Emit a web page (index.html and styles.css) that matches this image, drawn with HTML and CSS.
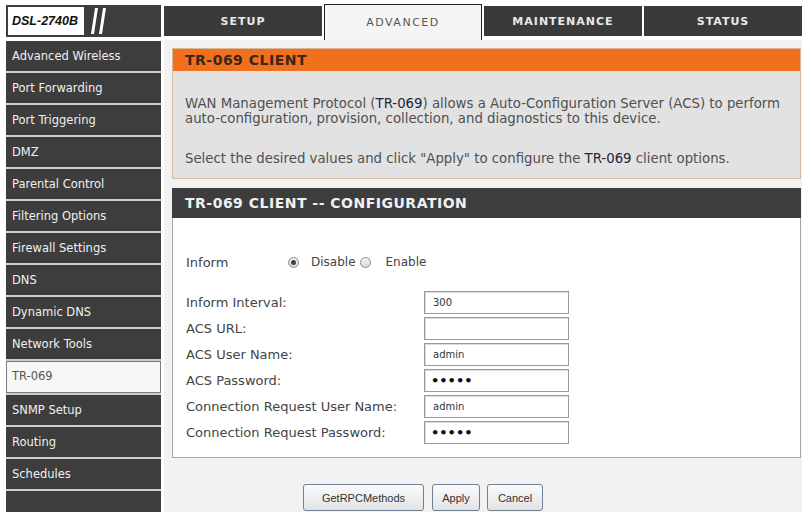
FILE: index.html
```html
<!DOCTYPE html>
<html lang="en">
<head>
	<meta charset="UTF-8">
	<title>DSL-2740B - TR-069</title>
	<link rel="stylesheet" href="styles.css">
</head>
<body>
	<div class="page">
		<div class="side">
			<div class="logo">
				<span class="model">DSL-2740B</span>
				<svg class="slash" width="22" height="30" viewBox="0 0 22 30">
					<path d="M3 28 L7 2 L10 2 L6 28 Z" fill="#fff"/>
					<path d="M11 28 L15 2 L18 2 L14 28 Z" fill="#fff"/>
				</svg>
			</div>
			<ul class="menu">
				<li><a href="javascript:">Advanced Wireless</a></li>
				<li><a href="javascript:">Port Forwarding</a></li>
				<li><a href="javascript:">Port Triggering</a></li>
				<li><a href="javascript:">DMZ</a></li>
				<li><a href="javascript:">Parental Control</a></li>
				<li><a href="javascript:">Filtering Options</a></li>
				<li><a href="javascript:">Firewall Settings</a></li>
				<li><a href="javascript:">DNS</a></li>
				<li><a href="javascript:">Dynamic DNS</a></li>
				<li><a href="javascript:">Network Tools</a></li>
				<li class="cur"><a href="javascript:">TR-069</a></li>
				<li><a href="javascript:">SNMP Setup</a></li>
				<li><a href="javascript:">Routing</a></li>
				<li><a href="javascript:">Schedules</a></li>
				<li class="blank"></li>
			</ul>
		</div>
		<div class="main">
			<ul class="tabs">
				<li>SETUP</li>
				<li class="on">ADVANCED</li>
				<li>MAINTENANCE</li>
				<li>STATUS</li>
			</ul>
			<div class="content">
				<div class="intro">
					<h2>TR-069 CLIENT</h2>
					<div class="intro_txt">
						<p>WAN Management Protocol (<span class="hl">TR-069</span>) allows a Auto-Configuration Server (ACS) to perform<br>auto-configuration, provision, collection, and diagnostics to this device.</p>
						<p>Select the desired values and click "Apply" to configure the <span class="hl">TR-069</span> client options.</p>
					</div>
				</div>
				<div class="conf">
					<h2>TR-069 CLIENT -- CONFIGURATION</h2>
					<div class="conf_body">
						<div class="inform">
							<span class="lbl">Inform</span>
							<input type="radio" name="inform" class="r1" checked>
							<span>Disable</span>
							<input type="radio" name="inform" class="r2">
							<span>Enable</span>
						</div>
						<div class="fields">
							<label>Inform Interval:</label><input type="text" value="300">
							<label>ACS URL:</label><input type="text" value="">
							<label>ACS User Name:</label><input type="text" value="admin">
							<label>ACS Password:</label><input type="password" class="pwd" value="admin">
							<label>Connection Request User Name:</label><input type="text" value="admin">
							<label>Connection Request Password:</label><input type="password" class="pwd" value="admin">
						</div>
					</div>
				</div>
				<div class="btns">
					<button class="b_get">GetRPCMethods</button>
					<button class="b_apply">Apply</button>
					<button class="b_cancel">Cancel</button>
				</div>
			</div>
		</div>
	</div>
</body>
</html>
```
FILE: styles.css
```css
/*reset*/
body{margin: 0; font-family: "DejaVu Sans", Verdana, sans-serif; background: #fff;}
ul,p,h2{margin: 0; padding: 0;}
a{text-decoration: none;}
li{list-style: none;}

/*frame*/
.page{display: flex; gap: 3px; width: 804px; height: 512px; padding: 4px 2px 0 6px; box-sizing: border-box; overflow: hidden;}
.side{width: 155px; display: flex; flex-direction: column; flex-shrink: 0;}
.main{flex: 1; min-width: 0; display: flex; flex-direction: column;}

/*logo*/
.logo{height: 32px; margin-top: 1px; background: #3d3d3d; display: flex; align-items: center; padding-left: 2px;}
.model{width: 76px; height: 28px; background: #fff; display: flex; align-items: center; padding-left: 4px; box-sizing: border-box; font: italic bold 12.5px "Liberation Sans", Arial, sans-serif; color: #111;}
.slash{margin-left: 4px;}

/*left menu*/
.menu{flex: 1; margin-top: 4px; display: flex; flex-direction: column; gap: 2px; background: #cdcdcd;}
.menu a{display: block; height: 30px; line-height: 30px; padding-left: 6px; background: #3d3d3d; color: #f0f0f0; font-size: 11.5px;}
.menu li.cur a{background: #f7f7f7; color: #555; border: 1px solid #7a7a7a; line-height: 28px; padding-left: 5px;}
.menu li.blank{flex: 1; background: #3d3d3d;}

/*top tabs*/
.tabs{display: grid; grid-template-columns: repeat(4, 1fr); gap: 2px; height: 36px; align-items: start;}
.tabs li{height: 30px; margin-top: 2px; background: #3a3a3a; color: #e8e8e8; font-size: 11px; font-weight: bold; letter-spacing: 1px; display: flex; align-items: center; justify-content: center;}
.tabs li.on{height: 36px; margin-top: 0; background: #f5f5f5; color: #555; font-weight: normal; letter-spacing: 1.5px; border: 1px solid #222; border-bottom: 0; box-sizing: border-box;}

/*content*/
.content{flex: 1; background: #f2f2f2; padding: 8px 1px 0 8px;}
.intro{border: 1px solid #dbb99b; background: #e2e2e2;}
.intro h2{height: 22px; line-height: 22px; padding-left: 12px; background: #f0701e; color: #3b2618; font-size: 14px; letter-spacing: .5px;}
.intro_txt{padding: 25px 0 12px 12px; font-size: 13.3px; line-height: 15px; color: #505050; white-space: nowrap;}
.intro_txt p+p{margin-top: 25px;}
.hl{color: #24243a;}

.conf{margin-top: 9px;}
.conf h2{height: 30px; line-height: 30px; padding-left: 13px; background: #3d3d3d; color: #f0f0f0; font-size: 14px; letter-spacing: .5px;}
.conf_body{padding: 35px 13px 13px; background: #fff; border: 1px solid #a8a8a8; border-top: 0;}

.inform{display: flex; align-items: center; height: 18px; font-size: 12px; color: #444;}
.inform .lbl{width: 102px; font-size: 13px;}
.inform input{appearance: none; -webkit-appearance: none; width: 11px; height: 11px; margin: 0; border: 1px solid #8a8a8a; border-radius: 50%; background: linear-gradient(#f4f4f4, #dadada); box-sizing: border-box; position: relative;}
.inform input:checked::after{content: ''; position: absolute; left: 2px; top: 2px; width: 5px; height: 5px; border-radius: 50%; background: #3c4a3c;}
.inform .r1{margin-right: 12px;}
.inform .r2{margin: 0 15px 0 4px;}

.fields{margin-top: 20px; display: grid; grid-template-columns: 238px 145px; row-gap: 3px; align-items: center;}
.fields label{font-size: 13px; color: #444;}
.fields input{height: 23px; margin: 0; padding: 0 8px; border: 1px solid #9a9a9a; box-shadow: inset 1px 1px 0 #dcdcdc; box-sizing: border-box; font: 10px "DejaVu Sans", Verdana, sans-serif; color: #333; outline: none;}
.fields input.pwd{font-size: 13px; font-weight: bold; padding-left: 6px; color: #111;}

/*buttons*/
.btns{display: flex; gap: 8px; margin: 26px 0 0 131px;}
.btns button{height: 27px; padding: 0; border: 1px solid #6f8196; border-radius: 3px; background: linear-gradient(#fbfbfb, #e2e2e2); font: 11px "Liberation Sans", Arial, sans-serif; color: #333;}
.b_get{width: 121px;}
.b_apply{width: 48px;}
.b_cancel{width: 56px; margin-left: -1px;}
```
